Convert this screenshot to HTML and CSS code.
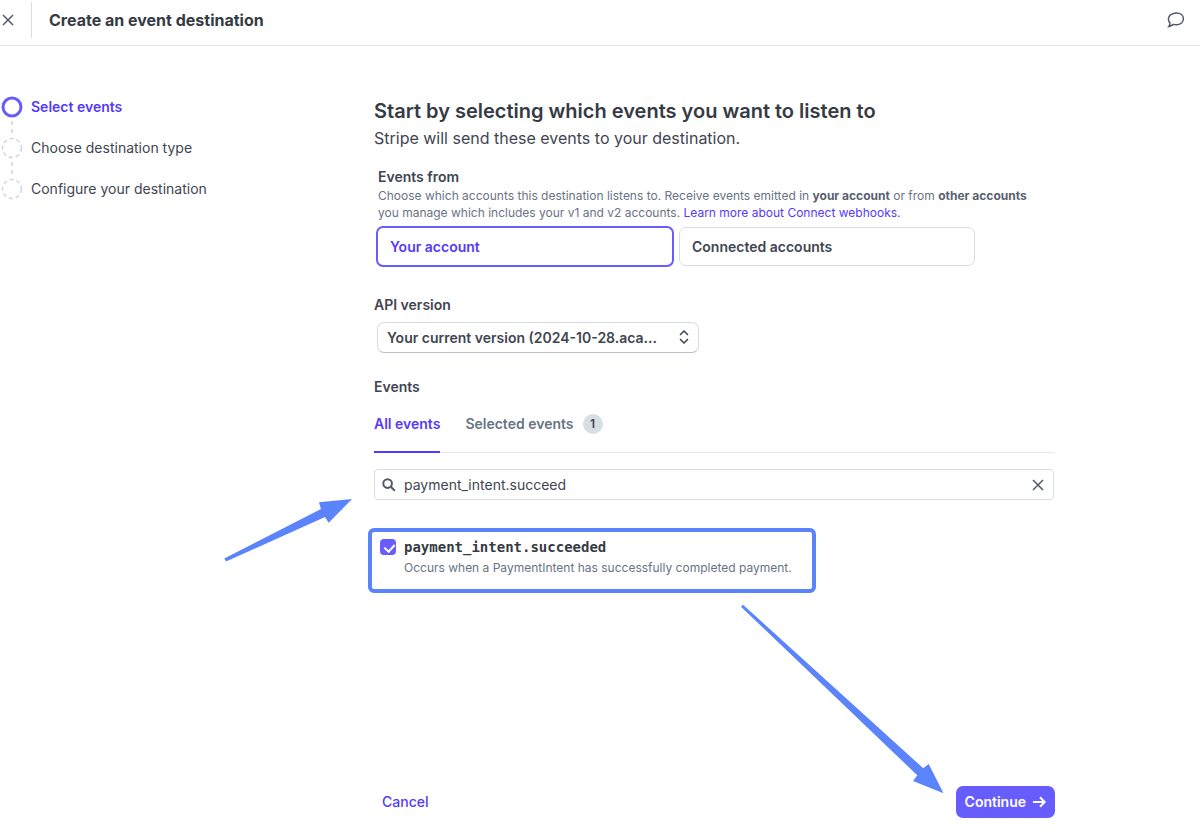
FILE: index.html
```html
<!DOCTYPE html>
<html lang="en">
<head>
<meta charset="utf-8">
<meta name="viewport" content="width=device-width, initial-scale=1">
<title>Create an event destination</title>
<link rel="stylesheet" href="styles.css">
</head>
<body>
<header class="topbar">
  <button class="icon-btn close" type="button" aria-label="Close">
    <svg width="12" height="12" viewBox="0 0 12 12"><path d="M1 1l10 10M11 1L1 11"/></svg>
  </button>
  <h1 class="topbar-title">Create an event destination</h1>
  <button class="icon-btn chat" type="button" aria-label="Feedback">
    <svg width="18" height="18" viewBox="0 0 18 18"><path d="M9.400 2c4.200 0 7 2.500 7 5.800s-2.800 6-7 6c-1.200 0-2.200-.1-3.100-.4-1.200.9-2.600 1.700-4.400 2.100.9-1.300 1.200-2.500 1.100-3.700C1.900 10.800 1.400 9.400 1.400 7.900 1.400 4.500 5.200 2 9.400 2z"/></svg>
  </button>
</header>
<div class="page">
  <nav aria-label="Progress">
    <ol class="steps">
      <li class="step current" aria-current="step"><svg class="dot" width="22" height="22" viewBox="0 0 22 22"><circle cx="11" cy="11" r="9"/></svg>Select events</li>
      <li class="step"><svg class="dot" width="22" height="22" viewBox="0 0 22 22"><circle cx="11" cy="11" r="9.500"/></svg>Choose destination type</li>
      <li class="step"><svg class="dot" width="22" height="22" viewBox="0 0 22 22"><circle cx="11" cy="11" r="9.500"/></svg>Configure your destination</li>
    </ol>
  </nav>
  <main class="main">
    <h2 class="heading">Start by selecting which events you want to listen to</h2>
    <p class="subheading">Stripe will send these events to your destination.</p>

    <fieldset class="accounts">
      <legend class="label">Events from</legend>
      <p class="help">Choose which accounts this destination listens to. Receive events emitted in <strong>your account</strong> or from <strong>other accounts</strong><br>you manage which includes your v1 and v2 accounts. <a class="link" href="#">Learn more about Connect webhooks.</a></p>
      <div class="cards">
        <label class="card"><input class="card-radio" type="radio" name="source" checked>Your account</label>
        <label class="card"><input class="card-radio" type="radio" name="source">Connected accounts</label>
      </div>
    </fieldset>

    <label class="label version-label" for="version">API version</label>
    <div class="select-wrap">
      <select class="select" id="version"><option>Your current version (2024-10-28.aca...</option></select>
      <svg class="select-icon" width="12" height="14" viewBox="0 0 12 14"><path d="M2 5l4-4 4 4M2 9l4 4 4-4"/></svg>
    </div>

    <h3 class="label events-label">Events</h3>
    <div class="tabs" role="tablist">
      <button class="tab active" type="button" role="tab" aria-selected="true">All events</button>
      <button class="tab" type="button" role="tab" aria-selected="false">Selected events<span class="count">1</span></button>
    </div>
    <div class="search">
      <svg class="magnifier" width="14" height="14" viewBox="0 0 14 14"><circle cx="5.600" cy="5.600" r="4.300"/><path d="M8.800 8.800l4 4"/></svg>
      <input class="search-input" type="text" aria-label="Search events" value="payment_intent.succeed">
      <button class="icon-btn" type="button" aria-label="Clear search">
        <svg width="12" height="12" viewBox="0 0 12 12"><path d="M1 1l10 10M11 1L1 11"/></svg>
      </button>
    </div>
    <div class="event">
      <input class="check" type="checkbox" id="event" checked>
      <label class="event-text" for="event"><span class="event-name">payment_intent.succeeded</span><span class="event-desc">Occurs when a PaymentIntent has successfully completed payment.</span></label>
    </div>

    <footer class="actions">
      <button class="cancel" type="button">Cancel</button>
      <button class="continue" type="submit">Continue
        <svg width="14" height="12" viewBox="0 0 14 12"><path d="M1 6h11.500M8 1.300L12.700 6 8 10.700"/></svg>
      </button>
    </footer>
  </main>
</div>
<svg class="arrows" width="1200" height="837" viewBox="0 0 1200 837" aria-hidden="true">
  <path d="M224.300 558.400L321 509l-2-6.800 33-3.200-23.300 23.800-3.700-5.800L226 561.600z"/>
  <path d="M743 604.800L923.300 768.300l5.400-4.300L943.500 793.300 913 781l4.300-5.700L741 606.700z"/>
</svg>
</body>
</html>
```
FILE: styles.css
```css
* { box-sizing: border-box; }
body {
  position: relative;
  margin: 0;
  background: #fff;
  color: #414552;
  font: 14px/20px Inter, "Liberation Sans", sans-serif;
}
h1, h2, h3, p, ol, fieldset { margin: 0; padding: 0; border: 0; }
button, input, select { font: inherit; color: inherit; }
button { margin: 0; padding: 0; border: 0; background: none; cursor: pointer; }
svg { fill: none; stroke: currentColor; stroke-width: 2; flex: none; }

.topbar {
  display: flex;
  align-items: center;
  height: 46px;
  padding: 0 15px 6px 0;
  border-bottom: 1px solid #e3e8ee;
}
.icon-btn { display: flex; color: #545969; }
.icon-btn svg { stroke-width: 1.5; }
.close { align-items: center; height: 36px; width: 32px; padding-left: 2px; border-right: 1px solid #d8dee4; }
.topbar-title { margin-left: 17px; font-size: 16px; font-weight: 700; color: #353a44; }
.chat { margin-left: auto; }

.page {
  display: grid;
  grid-template-columns: 374px minmax(0, 680px);
  min-height: calc(100vh - 46px);
}
.steps { padding: 50px 0 0 1px; list-style: none; }
.step { position: relative; display: flex; align-items: center; gap: 8px; height: 22px; margin-bottom: 19px; font-size: 14px; }
.step + .step::before {
  content: "";
  position: absolute;
  left: 10px;
  top: -16px;
  height: 12px;
  width: 2px;
  background: repeating-linear-gradient(#d8dee4 0 4px, transparent 4px 8px);
}
.dot { color: #d0d7de; stroke-width: 1.5; stroke-dasharray: 4 3; }
.current { color: #533afd; font-weight: 600; }
.current .dot { color: #675dff; stroke-width: 3; stroke-dasharray: none; }

.main { display: flex; flex-direction: column; padding: 50px 0 19px; }
.heading { font-size: 20px; line-height: 30px; font-weight: 600; color: #353a44; }
.subheading { font-size: 16px; line-height: 24px; }
.label { padding: 0; font-size: 14px; line-height: 20px; font-weight: 600; }
.accounts { margin-top: 17px; padding: 0 4px; }
.help { font-size: 12px; line-height: 17px; color: #687385; }
.help strong { font-weight: 700; color: #596171; }
.link { color: #533afd; text-decoration: none; }
.cards { display: flex; gap: 5px; max-width: 599px; margin: 5px -2px 0; }
.card {
  position: relative;
  flex: 1;
  margin: 1px 0;
  padding: 9px 12px;
  border: 1px solid #d8dee4;
  border-radius: 7px;
  font-size: 14px;
  line-height: 19px;
  font-weight: 600;
}
.card:has(:checked) { margin: 0; border: 2px solid #675dff; color: #533afd; }
.card-radio { position: absolute; inset: 0; margin: 0; opacity: 0; }
.version-label { margin-top: 28px; }
.select-wrap { position: relative; width: 322px; margin: 7px 0 0 3px; }
.select {
  appearance: none;
  display: block;
  width: 100%;
  height: 31px;
  padding: 0 30px 0 9px;
  border: 1px solid #d5dbe1;
  border-bottom-color: #b9c0c8;
  border-radius: 7px;
  background: #fff;
  font-weight: 600;
}
.select-icon { position: absolute; right: 9px; top: 8px; stroke-width: 1.5; pointer-events: none; }
.events-label { margin-top: 24px; }
.tabs { display: flex; gap: 25px; height: 56px; border-bottom: 1px solid #e3e8ee; }
.tab { display: flex; align-items: center; height: 56px; border-bottom: 2px solid transparent; color: #687385; font-weight: 600; }
.active { border-color: #533afd; color: #533afd; }
.count { width: 20px; margin-left: 9px; border-radius: 10px; background: #d8dee4; color: #414552; font-size: 12px; }
.search {
  display: flex;
  align-items: center;
  gap: 8px;
  height: 31px;
  margin-top: 16px;
  padding: 0 9px 0 7px;
  border: 1px solid #d8dee4;
  border-radius: 4px;
  color: #545969;
}
.search-input { flex: 1; min-width: 0; padding: 0; border: 0; outline: 0; color: #414552; }
.event {
  display: flex;
  gap: 8px;
  align-self: flex-start;
  min-width: 448px;
  height: 65px;
  margin: 28px 0 0 -6px;
  padding: 5px 12px 0 8px;
  border: 4px solid #5b83fb;
  border-radius: 6px;
}
.check {
  appearance: none;
  flex: none;
  position: relative;
  width: 16px;
  height: 16px;
  margin: 2px 0 0;
  border-radius: 4px;
  background: #675dff;
}
.check:checked::after {
  content: "";
  position: absolute;
  left: 6px;
  top: 3px;
  width: 5px;
  height: 8px;
  border: solid #fff;
  border-width: 0 2px 2px 0;
  transform: rotate(42deg);
}
.event-text { display: flex; flex-direction: column; }
.event-name { font: bold 14px/20px "DejaVu Sans Mono", monospace; color: #353a44; }
.event-desc { font-size: 12px; line-height: 22px; color: #687385; }
.actions { display: flex; align-items: center; justify-content: space-between; margin: auto -1px 0 8px; }
.cancel { color: #533afd; font-weight: 500; }
.continue {
  display: flex;
  align-items: center;
  gap: 6px;
  height: 32px;
  padding: 0 9px;
  border-radius: 7px;
  background: #675dff;
  color: #fff;
  font-weight: 600;
}
.arrows { position: absolute; left: 0; top: 0; pointer-events: none; }
.arrows path { fill: #5b83fb; stroke: none; }
```
